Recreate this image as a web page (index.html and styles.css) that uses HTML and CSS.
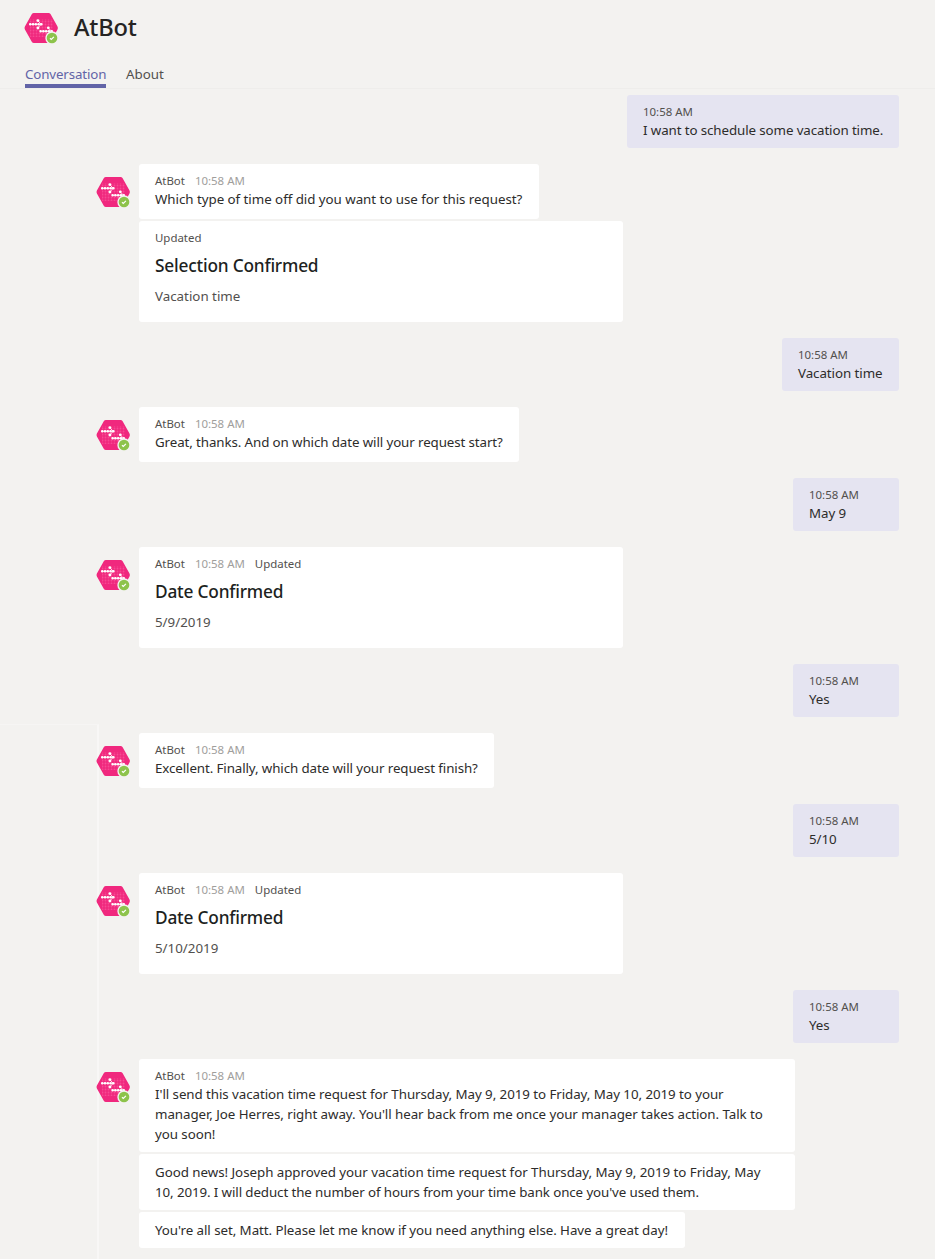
FILE: index.html
```
<!DOCTYPE html>
<html lang="en">
<head>
<meta charset="utf-8">
<title>AtBot</title>
<link rel="stylesheet" href="styles.css">
</head>
<body>
<svg class="defs" aria-hidden="true">
  <defs>
    <pattern id="grid" width="3" height="3" patternUnits="userSpaceOnUse"><circle cx="1.5" cy="1.5" r="0.9" fill="#fb6ca8" opacity=".5"/></pattern>
    <symbol id="bot" viewBox="0 0 36 34">
      <path d="M10.9 2h14.6q1.3 0 2 1.1l7 12.4q.8 1.5 0 3l-7 12.4q-.7 1.1-2 1.1H10.9q-1.3 0-2-1.1l-7-12.4q-.8-1.5 0-3l7-12.4q.7-1.1 2-1.1z" fill="#f0287e"/>
      <path d="M7 8h23v18H7z" fill="url(#grid)"/>
      <g fill="none" stroke="#fff" stroke-width="2.5" stroke-linecap="round" stroke-dasharray="0 2.8">
        <path d="M7.2 13.3h11.5M17.6 20.3h11.5"/>
      </g>
      <g fill="none" stroke="#fff" stroke-width=".8">
        <path d="M7.2 13.3h11M17.6 20.3h11M15 10l3.3 3.3-3.3 3.4M25.4 17.1l3.2 3.2"/>
      </g>
      <g fill="#fff"><circle cx="14.9" cy="9.6" r="1.4"/><circle cx="14.9" cy="17" r="1.4"/><circle cx="25.3" cy="16.8" r="1.4"/></g>
      <circle cx="29" cy="27" r="6.7" fill="#f3f2f0"/>
      <circle cx="29" cy="27" r="5.3" fill="#8dc34b"/>
      <path d="M27 27.2l1.3 1.2 2.6-2.6" fill="none" stroke="#fff" stroke-width="1.2"/>
    </symbol>
  </defs>
</svg>
<header class="header">
  <div class="title-row"><svg class="avatar"><use href="#bot"/></svg><h1>AtBot</h1></div>
  <nav class="tabs"><span class="tab active">Conversation</span><span class="tab about">About</span></nav>
</header>
<div class="side-panel"></div>
<main class="chat">
  <div class="mine first"><div class="meta">10:58 AM</div><div class="text tight">I want to schedule some vacation time.</div></div>
  <section class="bot"><svg class="avatar"><use href="#bot"/></svg><div class="stack">
    <div class="bubble w400"><div class="meta"><span class="name">AtBot</span><time>10:58 AM</time></div><div class="text loose">Which type of time off did you want to use for this request?</div></div>
    <div class="bubble card"><div class="meta"><span>Updated</span></div><h2>Selection Confirmed</h2><p>Vacation time</p></div>
  </div></section>
  <div class="mine vacation"><div class="meta">10:58 AM</div><div class="text">Vacation time</div></div>
  <section class="bot"><svg class="avatar"><use href="#bot"/></svg><div class="stack">
    <div class="bubble w380"><div class="meta"><span class="name">AtBot</span><time>10:58 AM</time></div><div class="text tight">Great, thanks. And on which date will your request start?</div></div>
  </div></section>
  <div class="mine"><div class="meta">10:58 AM</div><div class="text">May 9</div></div>
  <section class="bot"><svg class="avatar"><use href="#bot"/></svg><div class="stack">
    <div class="bubble card"><div class="meta"><span class="name">AtBot</span><time>10:58 AM</time><span>Updated</span></div><h2>Date Confirmed</h2><p>5/9/2019</p></div>
  </div></section>
  <div class="mine"><div class="meta">10:58 AM</div><div class="text">Yes</div></div>
  <section class="bot"><svg class="avatar"><use href="#bot"/></svg><div class="stack">
    <div class="bubble w355"><div class="meta"><span class="name">AtBot</span><time>10:58 AM</time></div><div class="text tight">Excellent. Finally, which date will your request finish?</div></div>
  </div></section>
  <div class="mine"><div class="meta">10:58 AM</div><div class="text">5/10</div></div>
  <section class="bot"><svg class="avatar"><use href="#bot"/></svg><div class="stack">
    <div class="bubble card"><div class="meta"><span class="name">AtBot</span><time>10:58 AM</time><span>Updated</span></div><h2>Date Confirmed</h2><p>5/10/2019</p></div>
  </div></section>
  <div class="mine"><div class="meta">10:58 AM</div><div class="text">Yes</div></div>
  <section class="bot"><svg class="avatar"><use href="#bot"/></svg><div class="stack">
    <div class="bubble long"><div class="meta"><span class="name">AtBot</span><time>10:58 AM</time></div><div class="text">I'll send this vacation time request for Thursday, May 9, 2019 to Friday, May 10, 2019 to your<br>manager, Joe Herres, right away. You'll hear back from me once your manager takes action. Talk to<br>you soon!</div></div>
    <div class="bubble follow"><div class="text"><span class="loose">Good news! Joseph approved your vacation time request for Thursday, May 9, 2019 to Friday, May</span><br><span class="tight">10, 2019. I will deduct the number of hours from your time bank once you've used them.</span></div></div>
    <div class="bubble follow last"><div class="text">You're all set, Matt. Please let me know if you need anything else. Have a great day!</div></div>
  </div></section>
</main>
</body>
</html>
```

FILE: styles.css
```
* { box-sizing: border-box; }
body { margin: 0; height: 1259px; overflow: hidden; position: relative; background: #f3f2f0; color: #2d2c2b; font: 13.33px/20px "Noto Sans", sans-serif; white-space: nowrap; }
h1, h2, p { margin: 0; }
.defs { position: absolute; width: 0; height: 0; }
.avatar { display: block; flex: none; width: 36px; height: 34px; }
.header { height: 89px; border-bottom: 1px solid #eeedeb; }
.title-row { display: flex; align-items: center; height: 55px; padding-left: 23px; gap: 15px; }
h1 { margin-top: -2px; color: #252423; font-size: 23.7px; line-height: 32px; font-weight: 500; letter-spacing: -.2px; }
.tabs { display: flex; gap: 20px; padding: 9px 0 0 25px; }
.tab { height: 24px; color: #52504e; width: 81px; }
.active { color: #6264a7; border-bottom: 4px solid #6264a7; letter-spacing: -.13px; }
.side-panel { position: absolute; left: 0; top: 724px; width: 99px; height: 540px; border-top: 1px solid #f6f5f4; border-right: 2px solid #f8f7f6; }
.chat { position: relative; display: flex; flex-direction: column; gap: 16px; padding: 6px 36px 0 95px; }
.mine { align-self: flex-end; width: 106px; height: 53px; padding: 8px 16px; border-radius: 3px; background: #e5e4f1; }
.first { width: 272px; }
.vacation { width: 117px; }
.bot { display: flex; align-items: flex-start; gap: 8px; }
.bot .avatar { margin-top: 11px; }
.stack { display: flex; flex-direction: column; gap: 2px; }
.bubble { height: 55px; padding: 8px 16px; border-radius: 3px; background: #fff; }
.text { letter-spacing: -.06px; }
.text.loose, .loose { letter-spacing: -.035px; }
.text.tight, .tight { letter-spacing: -.1px; }
.meta { display: flex; gap: 10px; height: 17px; font-size: 11.45px; line-height: 18px; color: #52504e; }
.meta time { color: #a09e9c; }
.w400 { width: 400px; }
.w380 { width: 380px; }
.w355 { width: 355px; }
.card { width: 484px; height: 101px; }
.card h2 { margin-top: 8px; color: #201f1e; font-size: 17.3px; line-height: 24px; font-weight: 550; letter-spacing: -.2px; }
.card p { margin-top: 8px; color: #52504e; }
.long { width: 656px; height: 93px; }
.follow { width: 656px; height: 56px; }
.last { width: 546px; height: 36px; }
```
